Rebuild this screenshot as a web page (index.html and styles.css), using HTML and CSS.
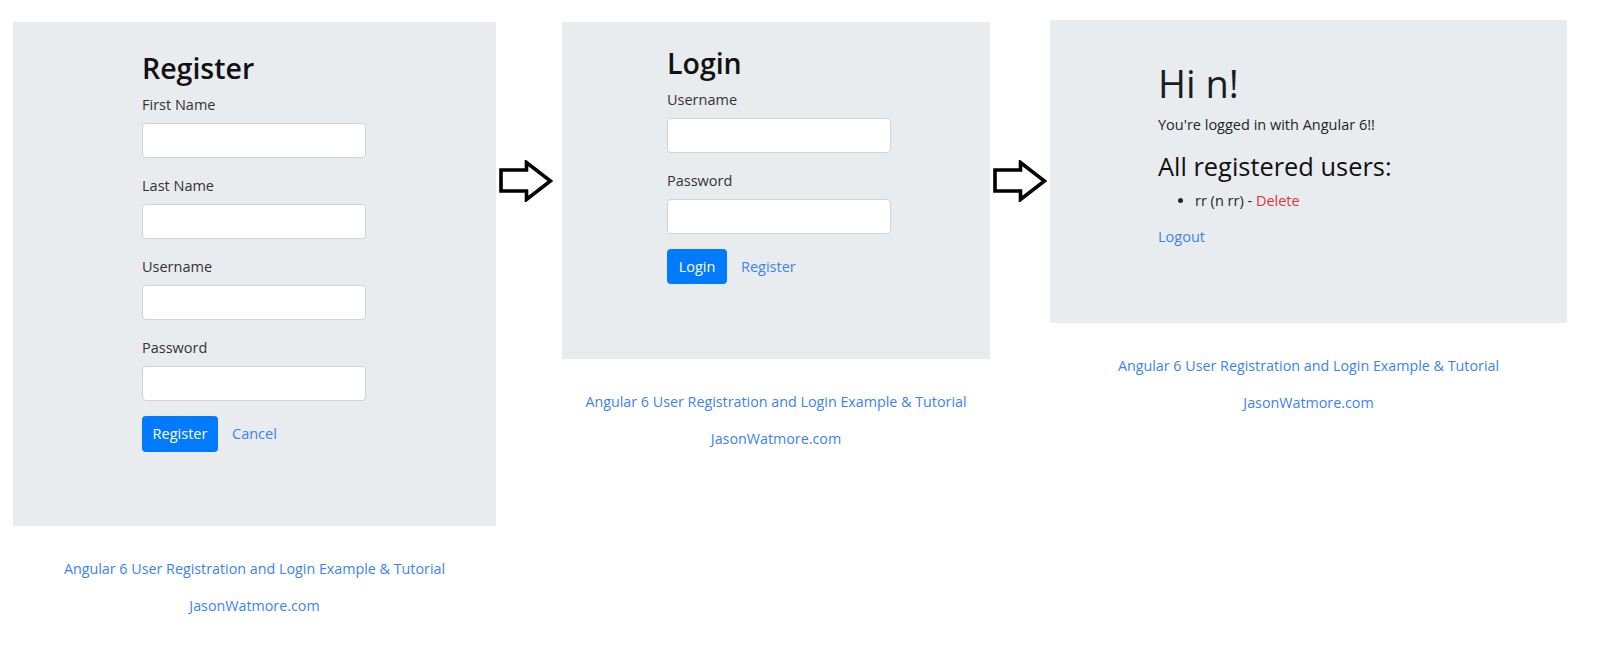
FILE: index.html
```html
<!DOCTYPE html>
<html lang="en">
<head>
<meta charset="utf-8">
<title>Angular 6 User Registration and Login</title>
<link rel="stylesheet" href="styles.css">
</head>
<body>
<div class="page">
  <section class="col col-register">
    <div class="panel panel-register">
      <h2 class="title">Register</h2>
      <div class="form-group">
        <label class="label">First Name</label>
        <div class="input"></div>
      </div>
      <div class="form-group">
        <label class="label">Last Name</label>
        <div class="input"></div>
      </div>
      <div class="form-group">
        <label class="label">Username</label>
        <div class="input"></div>
      </div>
      <div class="form-group form-group-last">
        <label class="label">Password</label>
        <div class="input"></div>
      </div>
      <div class="actions">
        <span class="btn btn-register">Register</span>
        <a class="link">Cancel</a>
      </div>
    </div>
    <div class="footer">
      <p><a class="link">Angular 6 User Registration and Login Example &amp; Tutorial</a></p>
      <p><a class="link">JasonWatmore.com</a></p>
    </div>
  </section>

  <svg class="arrow arrow-first" viewBox="0 0 54 42" width="54" height="42">
    <polygon points="2,10 27.5,10 27.5,2.5 51.5,21 27.5,39.5 27.5,31 2,31" fill="#fff" stroke="#000" stroke-width="3.6" stroke-linejoin="miter"/>
  </svg>

  <section class="col col-login">
    <div class="panel panel-login">
      <h2 class="title">Login</h2>
      <div class="form-group">
        <label class="label">Username</label>
        <div class="input"></div>
      </div>
      <div class="form-group form-group-last">
        <label class="label">Password</label>
        <div class="input"></div>
      </div>
      <div class="actions">
        <span class="btn btn-login">Login</span>
        <a class="link">Register</a>
      </div>
    </div>
    <div class="footer">
      <p><a class="link">Angular 6 User Registration and Login Example &amp; Tutorial</a></p>
      <p><a class="link">JasonWatmore.com</a></p>
    </div>
  </section>

  <svg class="arrow arrow-second" viewBox="0 0 54 42" width="54" height="42">
    <polygon points="2,10 27.5,10 27.5,2.5 51.5,21 27.5,39.5 27.5,31 2,31" fill="#fff" stroke="#000" stroke-width="3.6" stroke-linejoin="miter"/>
  </svg>

  <section class="col col-home">
    <div class="panel panel-home">
      <h1 class="greeting">Hi n!</h1>
      <p class="text">You're logged in with Angular 6!!</p>
      <h3 class="subtitle">All registered users:</h3>
      <ul class="users">
        <li>rr (n rr) - <a class="link link-danger">Delete</a></li>
      </ul>
      <p class="text"><a class="link">Logout</a></p>
    </div>
    <div class="footer">
      <p><a class="link">Angular 6 User Registration and Login Example &amp; Tutorial</a></p>
      <p><a class="link">JasonWatmore.com</a></p>
    </div>
  </section>
</div>
</body>
</html>
```
FILE: styles.css
```css
html, body {
  margin: 0;
  padding: 0;
  background: #fff;
}

body {
  font-family: "Open Sans", "Noto Sans", sans-serif;
  color: #212529;
  font-size: 14.5px;
  line-height: 21.75px;
}

.page {
  display: flex;
  align-items: flex-start;
  padding: 22px 0 0 13px;
}

.col {
  display: flex;
  flex-direction: column;
  flex: none;
}

.col-register { width: 483px; }
.col-login { width: 428px; }
.col-home { width: 517px; margin-top: -2px; }

.arrow {
  flex: none;
  display: block;
  margin-top: 138px;
}
.arrow-first { margin-left: 3px; margin-right: 9px; }
.arrow-second { margin-left: 3px; margin-right: 3px; }

.panel {
  background: #e9ecef;
  box-sizing: border-box;
}

.panel-register {
  height: 504px;
  padding: 28px 0 0 129px;
}

.panel-login {
  height: 337px;
  padding: 23px 0 0 105px;
}

.panel-home {
  height: 303px;
  padding: 40px 0 0 108px;
}

.title {
  margin: 0 0 8px;
  font-size: 28.5px;
  line-height: 36px;
  font-weight: 600;
  color: #111;
}

.form-group {
  margin-bottom: 17px;
  width: 224px;
}
.form-group-last { margin-bottom: 15px; }

.label {
  display: block;
  margin-bottom: 7px;
  height: 22px;
  color: #333;
}

.input {
  height: 33px;
  background: #fff;
  border: 1px solid #ced4da;
  border-radius: 4px;
}

.actions {
  display: flex;
  align-items: center;
  gap: 14px;
}

.btn {
  display: inline-flex;
  align-items: center;
  justify-content: center;
  height: 36px;
  background: #007bff;
  color: #fff;
  border-radius: 4px;
  font-size: 14.5px;
  font-weight: 500;
}
.btn-register { width: 76px; }
.btn-login { width: 60px; height: 35px; }

.link {
  color: #3b83f0;
  text-decoration: none;
}
.link-danger { color: #dc3545; }

.greeting {
  margin: 0 0 7px;
  font-size: 38px;
  line-height: 47px;
  font-weight: 500;
  color: #1a1d20;
}

.text {
  margin: 0;
  font-size: 14.5px;
  line-height: 22px;
}

.subtitle {
  margin: 14px 0 8px;
  font-size: 25.4px;
  line-height: 32px;
  font-weight: 500;
  color: #111;
}

.users {
  margin: 0 0 14px;
  padding-left: 37px;
}

.footer {
  margin-top: 32px;
  text-align: center;
  font-size: 14.3px;
}
.footer p {
  margin: 0 0 15px;
}
```
